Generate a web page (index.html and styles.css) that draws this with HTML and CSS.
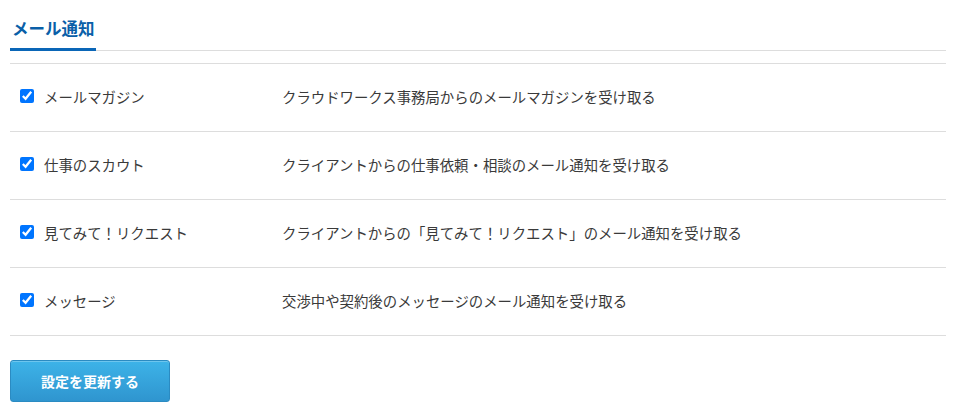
FILE: index.html
```html
<!DOCTYPE html>
<html lang="ja">
<head>
<meta charset="utf-8">
<title>メール通知</title>
<link rel="stylesheet" href="styles.css">
</head>
<body>
<div class="page">
  <div class="tabs">
    <h2 class="tab">メール通知</h2>
  </div>
  <ul class="list">
    <li class="row">
      <label class="name"><input type="checkbox" checked><span>メールマガジン</span></label>
      <span class="desc">クラウドワークス事務局からのメールマガジンを受け取る</span>
    </li>
    <li class="row">
      <label class="name"><input type="checkbox" checked><span>仕事のスカウト</span></label>
      <span class="desc">クライアントからの仕事依頼・相談のメール通知を受け取る</span>
    </li>
    <li class="row">
      <label class="name"><input type="checkbox" checked><span>見てみて！リクエスト</span></label>
      <span class="desc">クライアントからの「見てみて！リクエスト」のメール通知を受け取る</span>
    </li>
    <li class="row">
      <label class="name"><input type="checkbox" checked><span>メッセージ</span></label>
      <span class="desc">交渉中や契約後のメッセージのメール通知を受け取る</span>
    </li>
  </ul>
  <button class="submit" type="button">設定を更新する</button>
</div>
</body>
</html>
```
FILE: styles.css
```css
* { box-sizing: border-box; }
html, body { margin: 0; padding: 0; background: #fff; }
body {
  font-family: "Noto Sans CJK JP", "Noto Sans", sans-serif;
  color: #3a3a3a;
  font-size: 14.4px;
}
.page {
  width: 936px;
  margin-left: 10px;
  padding-top: 16px;
}
.tabs {
  display: flex;
  border-bottom: 1px solid #ddd;
}
.tab {
  margin: 0 0 -1px 0;
  padding: 0 0 7px 2px;
  width: 86px;
  font-size: 16.5px;
  line-height: 25px;
  font-weight: bold;
  color: #0a5fa8;
  border-bottom: 3px solid #0a66b7;
}
.list {
  list-style: none;
  margin: 12px 0 0 0;
  padding: 0;
  border-top: 1px solid #ddd;
}
.row {
  display: flex;
  align-items: center;
  height: 68px;
  border-bottom: 1px solid #ddd;
  padding: 0 0 3px 10px;
}
.name {
  display: flex;
  align-items: center;
  width: 262px;
}
.name input {
  margin: 0 10px 0 0;
  width: 14px;
  height: 14px;
}
.desc { display: block; }
.submit {
  margin-top: 24px;
  width: 160px;
  height: 42px;
  border: 1px solid #2b8bc2;
  border-radius: 3px;
  background: linear-gradient(#3db3e8, #2f95cf);
  color: #fff;
  font-family: "Noto Sans CJK JP", sans-serif;
  font-size: 14px;
  font-weight: bold;
  box-shadow: inset 0 1px 0 rgba(255,255,255,0.25);
  padding: 0;
}
```
